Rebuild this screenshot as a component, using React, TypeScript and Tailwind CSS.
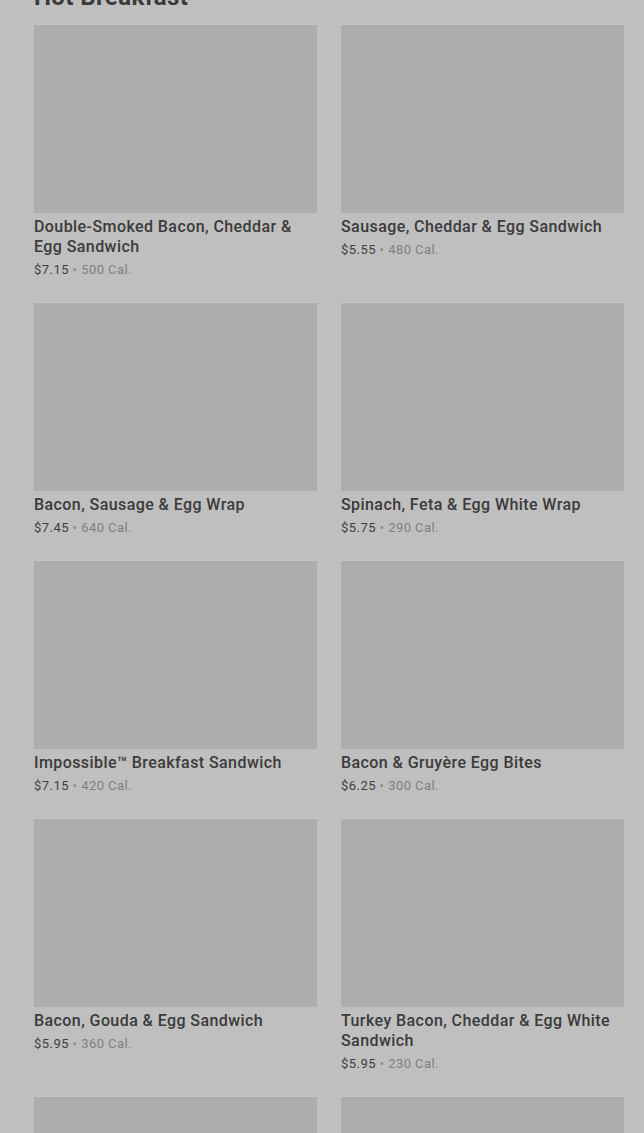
const items = [
  { name: "Double-Smoked Bacon, Cheddar & Egg Sandwich", price: "$7.15", cal: "500 Cal." },
  { name: "Sausage, Cheddar & Egg Sandwich", price: "$5.55", cal: "480 Cal." },
  { name: "Bacon, Sausage & Egg Wrap", price: "$7.45", cal: "640 Cal." },
  { name: "Spinach, Feta & Egg White Wrap", price: "$5.75", cal: "290 Cal." },
  { name: "Impossible™ Breakfast Sandwich", price: "$7.15", cal: "420 Cal." },
  { name: "Bacon & Gruyère Egg Bites", price: "$6.25", cal: "300 Cal." },
  { name: "Bacon, Gouda & Egg Sandwich", price: "$5.95", cal: "360 Cal." },
  { name: "Turkey Bacon, Cheddar & Egg White Sandwich", price: "$5.95", cal: "230 Cal." },
  { name: "Kale & Mushroom Egg Bites", price: "$5.45", cal: "230 Cal." },
  { name: "Egg White & Roasted Red Pepper Egg Bites", price: "$5.45", cal: "170 Cal." },
];

function MenuCard({ name, price, cal }: { name: string; price: string; cal: string }) {
  return (
    <div className="flex flex-col">
      <div className="h-[189px] w-full bg-[#adadad] border-t border-[#c4c4c4]" />
      <h3 className="mt-1 text-[16px] leading-5 font-medium text-[#3b3b3b] tracking-[0.42px]">{name}</h3>
      <p className="mt-1 text-[13px] leading-[18px] tracking-[0.45px] text-[#3f3f3f]">
        {price} <span className="text-[#8a8a8a]">•</span>{" "}
        <span className="text-[#808080]">{cal}</span>
      </p>
    </div>
  );
}

export default function App() {
  return (
    <main
      className="min-h-screen overflow-hidden bg-[#bfbfbf] pl-[34px] pr-[20px]"
      style={{ fontFamily: "Roboto, 'Noto Sans', sans-serif" }}
    >
      {/* Section heading, scrolled mostly out of view */}
      <h2 className="mt-[-18px] h-[42px] text-[24px] leading-[30px] font-bold tracking-[0.4px] text-[#3a3a3a]">Hot Breakfast</h2>

      {/* Menu grid */}
      <div className="grid grid-cols-2 gap-x-6 gap-y-[23px]">
        {items.map((item) => (
          <MenuCard key={item.name} {...item} />
        ))}
      </div>
    </main>
  );
}
